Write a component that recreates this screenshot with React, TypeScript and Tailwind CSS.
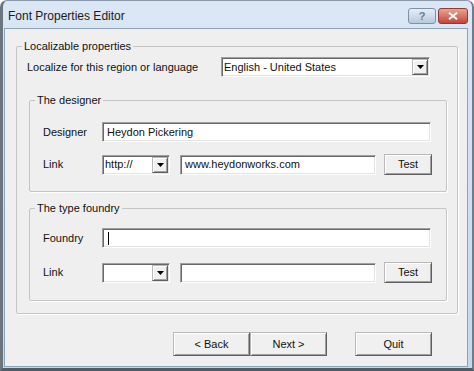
import React from "react";

const sunken =
  "bg-white border border-t-[#a0a0a0] border-l-[#a0a0a0] border-b-white border-r-white shadow-[inset_1px_1px_0_#696969,inset_-1px_-1px_0_#e3e3e3]";
const raised =
  "bg-[#f0f0f0] border border-t-[#b9b9b9] border-l-[#b9b9b9] border-b-[#5f5f5f] border-r-[#5f5f5f] shadow-[inset_1px_1px_0_#ffffff,inset_-1px_-1px_0_#a0a0a0]";

function DropArrow() {
  return (
    <div className={`${raised} w-[16px] h-full flex items-center justify-center shrink-0`}>
      <svg width="7" height="4" viewBox="0 0 7 4">
        <polygon points="0,0 7,0 3.5,4" fill="#000" />
      </svg>
    </div>
  );
}

function Select({ width, value }: { width: string; value?: string }) {
  return (
    <div className={`${sunken} ${width} h-[20px] flex items-stretch p-[1px] pl-[2px]`}>
      <div className="flex-1 flex items-center overflow-hidden whitespace-nowrap">{value}</div>
      <DropArrow />
    </div>
  );
}

function TextBox({ width, value, caret }: { width: string; value?: string; caret?: boolean }) {
  return (
    <div className={`${sunken} ${width} h-[20px] flex items-center pl-[4px] whitespace-nowrap`}>
      {caret && <div className="w-[1px] h-[13px] bg-black ml-[1px]" />}
      {value}
    </div>
  );
}

function Button({ label, width, height }: { label: string; width: string; height: string }) {
  return (
    <button className={`${raised} ${width} ${height} flex items-center justify-center text-[#111]`}>
      {label}
    </button>
  );
}

function LinkRow({ proto, url }: { proto?: string; url?: string }) {
  return (
    <div className="flex items-center">
      <div className="w-[72px] pl-[13px]">Link</div>
      <Select width="w-[68px]" value={proto} />
      <div className="ml-[10px]">
        <TextBox width="w-[196px]" value={url} />
      </div>
      <div className="ml-[8px]">
        <Button label="Test" width="w-[48px]" height="h-[21px]" />
      </div>
    </div>
  );
}

export default function App() {
  return (
    <div className="w-[474px] h-[371px] overflow-hidden bg-white font-['Liberation_Sans',Arial,sans-serif] text-[11px] text-[#111]">
      <div className="w-[474px] h-[371px] flex flex-col bg-gradient-to-b from-[#dbe7f4] to-[#c4d8ec] border-t border-t-[#8a99a8] border-l-[3px] border-l-[#6b7580] border-r-[2px] border-r-[#6f7c89] border-b-[3px] border-b-[#4f5c68] rounded-tl-[7px] rounded-tr-[7px]">
        {/* title bar */}
        <div className="h-[27px] flex items-center justify-between pl-[5px] pr-[4px] shrink-0">
          <div className="text-[12px] text-[#1b1b1b] pt-[2px]">Font Properties Editor</div>
          <div className="flex items-center gap-[2px] pt-[3px]">
            <div className="w-[28px] h-[16px] rounded-[3px] border border-[#7f91a6] bg-gradient-to-b from-[#e6eef7] to-[#b7c9de] flex items-center justify-center text-[11px] font-bold text-[#6b7a8c] leading-none">
              ?
            </div>
            <div className="w-[30px] h-[16px] rounded-[3px] border border-[#8d3b33] bg-gradient-to-b from-[#e8a393] to-[#c2443a] flex items-center justify-center">
              <svg width="10" height="8" viewBox="0 0 10 8">
                <path d="M1 0.8 L9 7.2 M9 0.8 L1 7.2" stroke="#fff" strokeWidth="2" />
              </svg>
            </div>
          </div>
        </div>

        {/* client area */}
        <div className="flex-1 ml-[1px] mr-[4px] mb-[1px] bg-[#efefef] border border-[#8da3b9] flex flex-col">
          <fieldset className="ml-[11px] mt-[10px] w-[442px] h-[275px] border border-[#c5c5c5] shadow-[1px_1px_0_#ffffff] rounded-[2px]">
            <legend className="ml-[5px] px-[2px] leading-[14px]">Localizable properties</legend>
            <div className="flex items-center mt-[4px] pl-[10px]">
              <div className="w-[194px]">Localize for this region or language</div>
              <Select width="w-[209px]" value="English - United States" />
            </div>

            <fieldset className="ml-[12px] mt-[16px] w-[418px] h-[99px] border border-[#c5c5c5] shadow-[1px_1px_0_#ffffff] rounded-[2px]">
              <legend className="ml-[5px] px-[2px] leading-[14px]">The designer</legend>
              <div className="flex items-center mt-[15px]">
                <div className="w-[72px] pl-[13px]">Designer</div>
                <TextBox width="w-[329px]" value="Heydon Pickering" />
              </div>
              <div className="mt-[12px]">
                <LinkRow proto="http://" url="www.heydonworks.com" />
              </div>
            </fieldset>

            <fieldset className="ml-[12px] mt-[9px] w-[418px] h-[100px] border border-[#c5c5c5] shadow-[1px_1px_0_#ffffff] rounded-[2px]">
              <legend className="ml-[5px] px-[2px] leading-[14px]">The type foundry</legend>
              <div className="flex items-center mt-[13px]">
                <div className="w-[72px] pl-[13px]">Foundry</div>
                <TextBox width="w-[329px]" caret />
              </div>
              <div className="mt-[14px]">
                <LinkRow />
              </div>
            </fieldset>
          </fieldset>

          <div className="flex mt-[18px] pl-[168px]">
            <Button label="< Back" width="w-[77px]" height="h-[24px]" />
            <Button label="Next >" width="w-[77px]" height="h-[24px]" />
            <div className="ml-[28px]">
              <Button label="Quit" width="w-[77px]" height="h-[24px]" />
            </div>
          </div>
        </div>
      </div>
    </div>
  );
}
